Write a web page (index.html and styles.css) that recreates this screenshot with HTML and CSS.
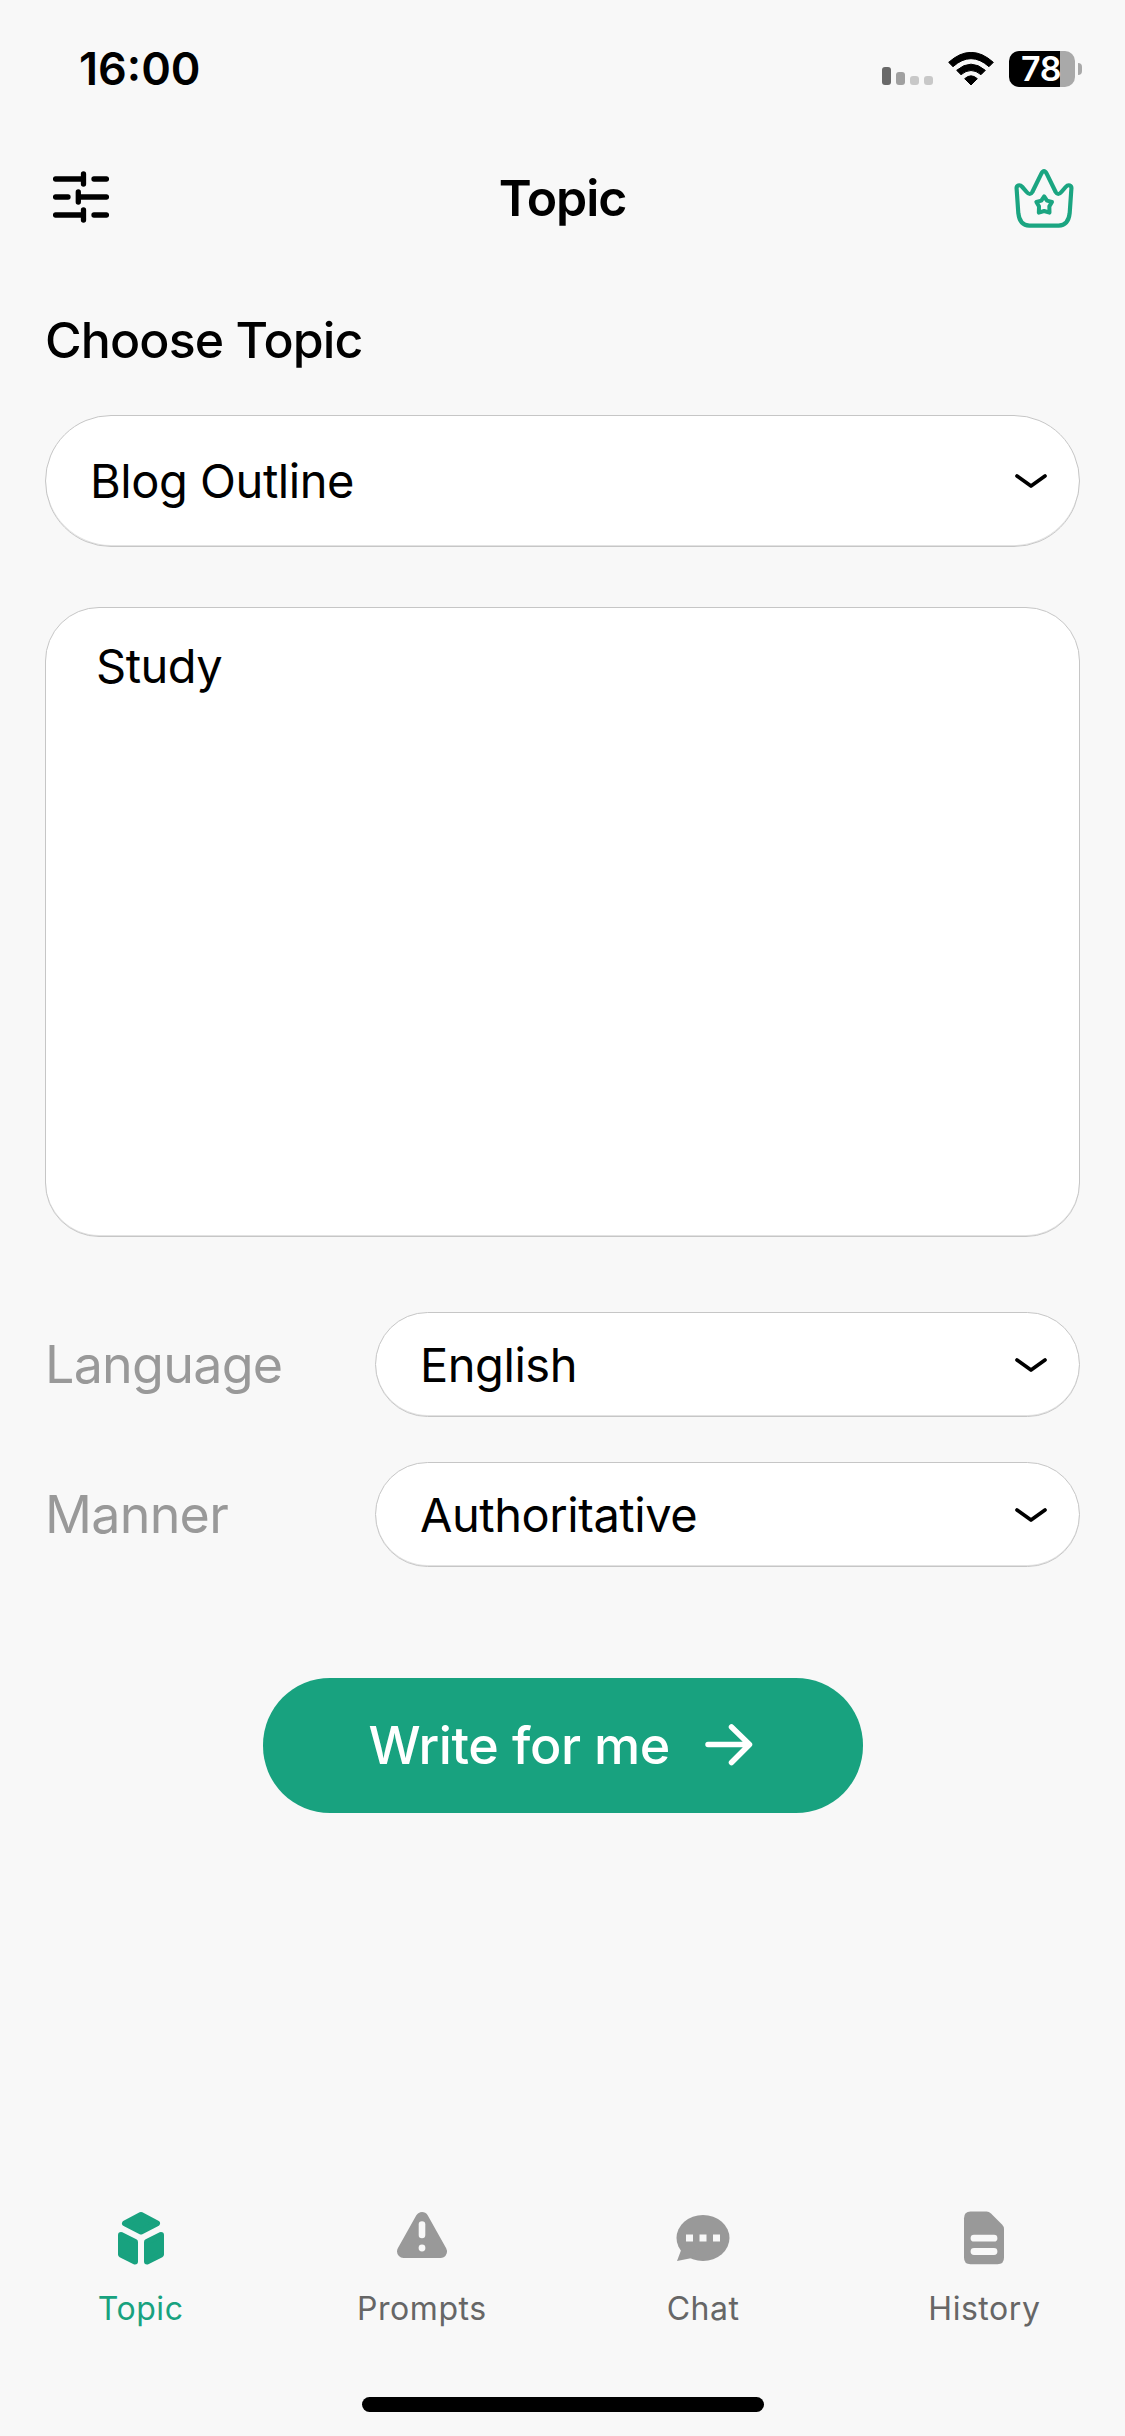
FILE: index.html
```html
<!DOCTYPE html>
<html lang="en">
<head>
<meta charset="utf-8">
<title>Topic</title>
<link rel="stylesheet" href="styles.css">
</head>
<body>
<div class="screen">
  <div class="status">
    <span class="clock">16:00</span>
    <div class="status-icons">
      <div class="signal"><i class="bar bar-1"></i><i class="bar bar-2"></i><i class="bar"></i><i class="bar"></i></div>
      <svg class="wifi" viewBox="0 0 138 102">
        <path d="M2 31Q69 -29 136 31L123 44Q69 -4 15 44Z" stroke="#000" stroke-width="3" stroke-linejoin="round"/>
        <path d="M26 55Q69 18 112 55L99 68Q69 43 39 68Z" stroke="#000" stroke-width="3" stroke-linejoin="round"/>
        <path d="M50 80Q69 63 88 80L69 99Z" stroke="#000" stroke-width="3" stroke-linejoin="round"/>
      </svg>
      <div class="battery"><div class="cell">78</div><i class="nub"></i></div>
    </div>
  </div>

  <header class="nav">
    <svg class="sliders" viewBox="0 0 56 52" fill="none" stroke="#000" stroke-width="5.300" stroke-linecap="round">
      <path d="M2.500 8H30.500M41 8H53.500M30.500 3V13M2.500 26H15M25.300 26H53.500M25.300 21V31M2.500 44H30.500M41 44H53.500M30.500 39V49"/>
    </svg>
    <h1 class="title">Topic</h1>
    <svg class="crown" viewBox="0 0 204 204" fill="none" stroke="#1ba581" stroke-width="12.500" stroke-linejoin="round">
      <path d="M20 76C18 63 29 60 37 69L50 84Q60 96 67 84L94 29Q102 14 110 29L137 84Q144 96 154 84L167 69C175 60 186 63 184 76L179 148Q175 184 146 185H58Q29 184 25 148Z"/>
      <path stroke-width="12" d="M102.500 97L111 110L126 114L118 127L118.500 146L102.500 141L86.500 146L87 127L79 114L94 110Z"/>
    </svg>
  </header>

  <main class="content">
    <h2 class="heading">Choose Topic</h2>
    <div class="select select-large"><span class="value">Blog Outline</span><svg class="chevron" viewBox="0 0 32 14"><path d="M2 2L16 12L30 2"/></svg></div>
    <div class="prompt">Study</div>
    <div class="option">
      <span class="label">Language</span>
      <div class="select"><span class="value">English</span><svg class="chevron" viewBox="0 0 32 14"><path d="M2 2L16 12L30 2"/></svg></div>
    </div>
    <div class="option">
      <span class="label">Manner</span>
      <div class="select"><span class="value">Authoritative</span><svg class="chevron" viewBox="0 0 32 14"><path d="M2 2L16 12L30 2"/></svg></div>
    </div>
    <div class="write"><span class="write-text">Write for me</span>
      <svg class="arrow" viewBox="0 0 48 42"><path d="M3 20.500H44M26.500 3L44.500 20.500L26.500 38.500"/></svg>
    </div>
  </main>

  <nav class="tabs">
    <div class="tab active">
      <svg class="tab-icon" viewBox="0 0 60 60">
        <g fill="#18a27f" stroke="#18a27f" stroke-width="6" stroke-linejoin="round">
          <path d="M30 7L46 15.300L30 23.500L14 15.300Z"/>
          <path d="M10 27L24 34V53.500L10 46.500Z"/>
          <path d="M50 27L36 34V53.500L50 46.500Z"/>
        </g>
      </svg>
      <span class="tab-label">Topic</span>
    </div>
    <div class="tab">
      <svg class="tab-icon" viewBox="0 0 60 60">
        <path d="M30 10.500L48.500 43.500H11.500Z" fill="#999" stroke="#999" stroke-width="13" stroke-linejoin="round"/>
        <path d="M30 16.500V27" stroke="#f8f8f8" stroke-width="6.600" stroke-linecap="round"/>
        <circle cx="30" cy="40" r="3.400" fill="#f8f8f8"/>
      </svg>
      <span class="tab-label">Prompts</span>
    </div>
    <div class="tab">
      <svg class="tab-icon" viewBox="0 0 60 60">
        <ellipse cx="30" cy="30" rx="26.500" ry="23" fill="#999"/>
        <path d="M8.500 41L4 53L19 50L26 40L8 36Z" fill="#999"/>
        <path d="M13 26.500H20V33.500H13ZM26.500 26.500H33.500V33.500H26.500ZM40 26.500H47V33.500H40Z" fill="#f8f8f8"/>
      </svg>
      <span class="tab-label">Chat</span>
    </div>
    <div class="tab">
      <svg class="tab-icon" viewBox="0 0 60 60">
        <path d="M16.500 3.500H32.500Q35 3.500 37 5.500L48 16.500Q50 18.500 50 21V49.500Q50 56.300 43.500 56.300H16.500Q10 56.300 10 49.500V10.500Q10 3.500 16.500 3.500Z" fill="#999"/>
        <path d="M20 30.200H40M20 43.500H40" stroke="#f8f8f8" stroke-width="6.800" stroke-linecap="round"/>
      </svg>
      <span class="tab-label">History</span>
    </div>
  </nav>
  <div class="home"></div>
</div>
</body>
</html>
```
FILE: styles.css
```css
* { box-sizing: border-box; }
body { margin: 0; background: #f8f8f8; color: #000; font-family: Inter, "Liberation Sans", sans-serif; }
svg { display: block; flex: none; }
h1, h2 { margin: 0; }
.screen { width: 1125px; height: 2436px; display: flex; flex-direction: column; overflow: hidden; }

.status { height: 138px; padding: 0 43px 0 79px; display: flex; justify-content: space-between; align-items: center; }
.clock { font-size: 45px; font-weight: 600; line-height: 54px; }
.status-icons { display: flex; align-items: center; }
.signal { display: flex; align-items: flex-end; gap: 5px; height: 34px; margin: 0 15px 2px 0; }
.bar { width: 9px; height: 9px; border-radius: 3px; background: #c8c8c8; }
.bar-1 { height: 18px; background: #696969; }
.bar-2 { height: 13px; background: #a0a0a0; }
.wifi { width: 46px; height: 34px; margin-right: 15px; }
.battery { display: flex; align-items: center; gap: 3px; }
.cell { width: 66px; height: 36px; border-radius: 10px; background: linear-gradient(90deg, #000 51px, #a9a9a9 51px); color: #fff; font-size: 34px; font-weight: 600; line-height: 36px; padding-left: 12px; letter-spacing: -0.3px; }
.nub { width: 4px; height: 12px; border-radius: 0 4px 4px 0; background: #a9a9a9; }

.nav { height: 120px; padding: 0 47px 0 53px; display: flex; align-items: center; justify-content: space-between; }
.sliders { width: 56px; height: 52px; margin-bottom: 2px; }
.crown { width: 68px; height: 68px; }
.title { margin-left: 6px; font-size: 50px; font-weight: 600; line-height: 60px; letter-spacing: -1.1px; }

.content { padding: 52px 45px 0; display: flex; flex-direction: column; }
.heading { font-size: 50px; font-weight: 500; line-height: 60px; letter-spacing: -0.88px; }
.select { flex: 1; height: 105px; display: flex; align-items: center; justify-content: space-between; padding: 0 32px 0 44px; background: #fff; border: 1px solid #c6c6c6; border-radius: 53px; box-shadow: inset 0 -1px 0 #e2e2e2; }
.select-large { flex: none; height: 132px; margin-top: 45px; border-radius: 66px; }
.value { font-size: 47px; line-height: 58px; letter-spacing: -0.45px; }
.chevron { width: 32px; height: 14px; fill: none; stroke: #000; stroke-width: 3.700px; stroke-linecap: round; stroke-linejoin: round; }
.prompt { height: 630px; margin: 60px 0 75px; padding: 29px 50px; background: #fff; border: 1px solid #c6c6c6; border-radius: 54px; box-shadow: inset 0 -1px 0 #e2e2e2; font-size: 47px; line-height: 58px; letter-spacing: -0.5px; }
.option { display: flex; align-items: center; margin-bottom: 45px; }
.label { width: 330px; font-size: 52px; line-height: 62px; letter-spacing: -0.75px; color: #999; }
.write { align-self: center; width: 600px; height: 135px; margin-top: 66px; border-radius: 67px; background: #18a27f; color: #fff; display: flex; align-items: center; padding: 0 110px 0 106px; justify-content: space-between; }
.write-text { font-size: 52px; font-weight: 500; line-height: 62px; letter-spacing: -0.4px; }
.arrow { width: 48px; height: 42px; margin-bottom: 1px; fill: none; stroke: #fff; stroke-width: 5.500px; stroke-linecap: round; stroke-linejoin: round; }

.tabs { margin-top: auto; height: 189px; display: flex; }
.tab { flex: 1; display: flex; flex-direction: column; align-items: center; color: #666; }
.tab-icon { width: 60px; height: 60px; }
.tab-label { margin-top: 21px; font-size: 32px; line-height: 40px; letter-spacing: 0.55px; }
.active { color: #18a27f; }
.home { align-self: center; width: 402px; height: 15px; margin-bottom: 24px; border-radius: 8px; background: #000; }
```
